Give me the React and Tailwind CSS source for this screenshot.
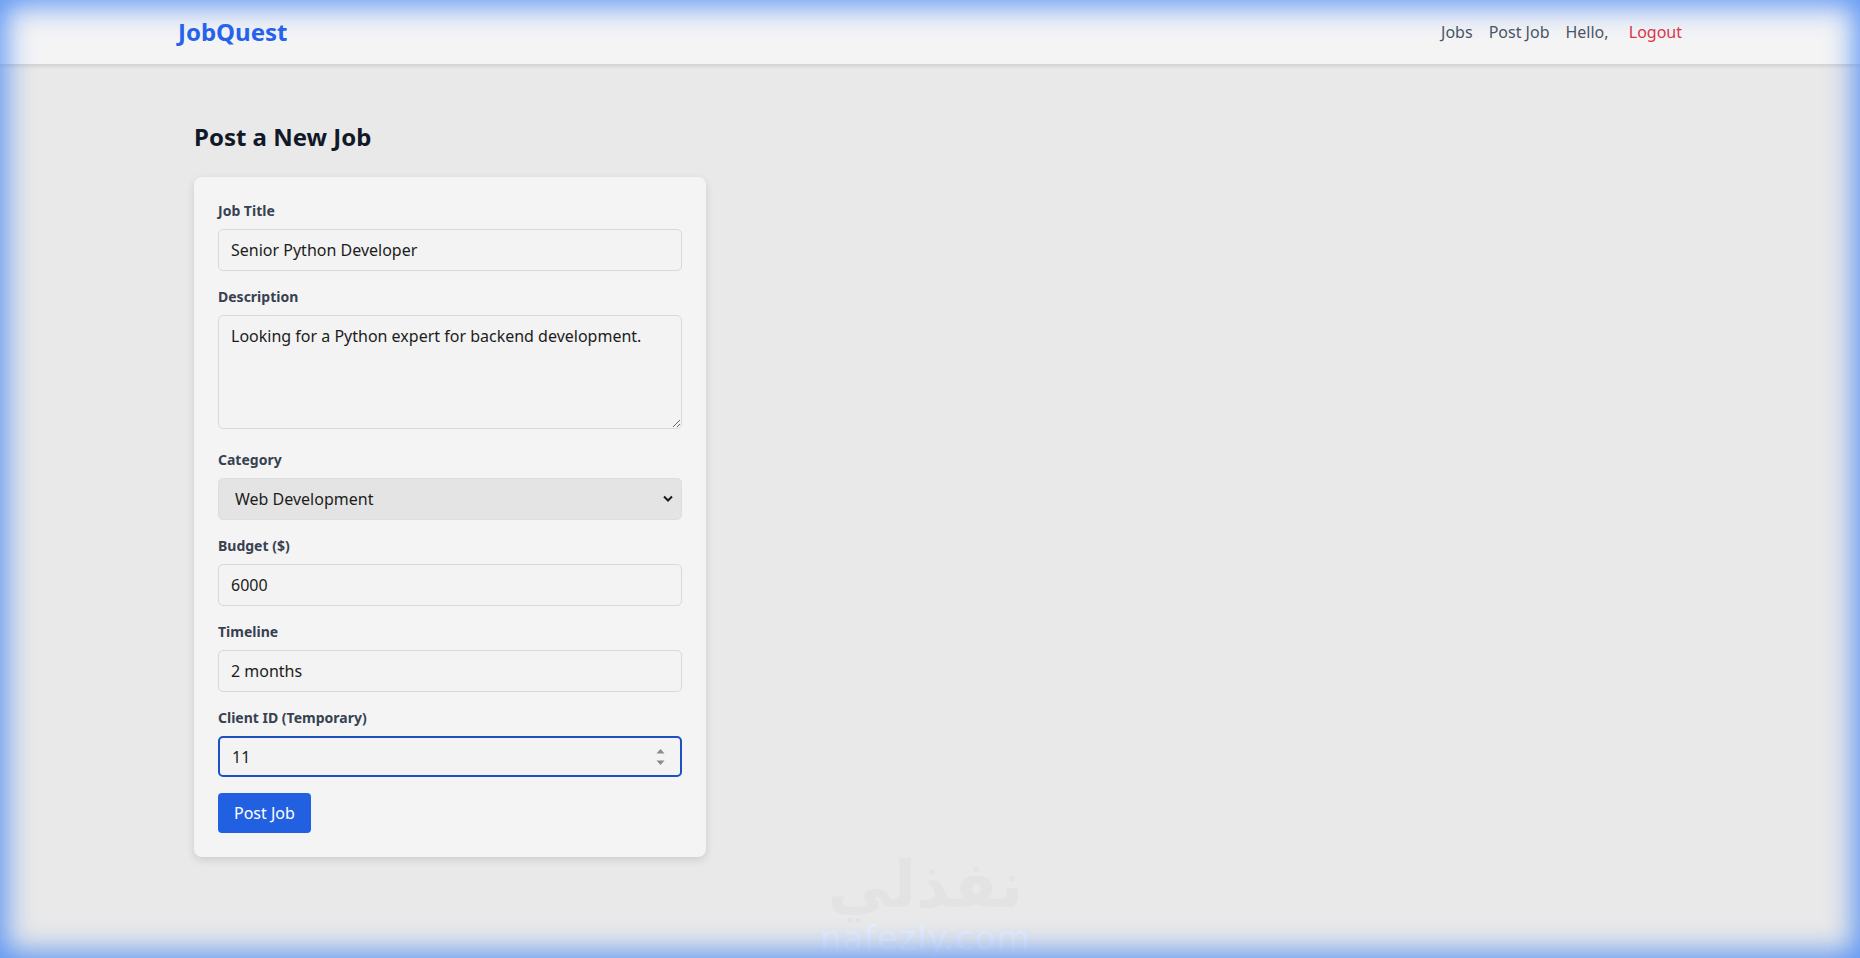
import React from "react";

const font = { fontFamily: '"Noto Sans", "Open Sans", "DejaVu Sans", sans-serif' };

function Field({ label, children, mb = "mb-4" }) {
  return (
    <div className={mb}>
      <label className="block text-sm font-bold text-[#374151] mb-2 leading-5">{label}</label>
      {children}
    </div>
  );
}

const inputCls =
  "block w-full h-[42px] px-3 py-2 text-base leading-6 text-[#1c1c1c] bg-[#f3f3f3] border border-[#d9d9d9] rounded-[5px] outline-none";

export default function App() {
  return (
    <div className="relative min-h-[958px] w-full bg-[#e9e9e9] overflow-hidden" style={font}>
      <nav className="bg-[#f4f4f5] shadow-[0_2px_4px_rgba(0,0,0,0.12)] relative z-10">
        <div className="container mx-auto px-4 h-16 flex items-center justify-between">
          <span className="text-2xl font-bold text-[#2563eb] leading-8">JobQuest</span>
          <div className="flex items-center gap-4 text-base text-[#4b5563]">
            <span>Jobs</span>
            <span>Post Job</span>
            <span className="whitespace-pre">Hello, </span>
            <span className="text-[#dc3545]">Logout</span>
          </div>
        </div>
      </nav>

      <main className="container mx-auto px-8 pt-[57px]">
        <h1 className="text-2xl font-bold text-[#111827] leading-8 mb-6">Post a New Job</h1>
        <div className="w-[512px] bg-[#f4f4f4] rounded-lg shadow-[0_3px_8px_rgba(0,0,0,0.12)] p-6">
          <Field label="Job Title">
            <input className={inputCls} defaultValue="Senior Python Developer" readOnly />
          </Field>
          <Field label="Description" mb="mb-[21px]">
            <textarea
              className="block w-full h-[114px] px-3 py-2 text-base leading-6 text-[#1c1c1c] bg-[#f3f3f3] border border-[#d9d9d9] rounded-[5px] outline-none"
              defaultValue="Looking for a Python expert for backend development."
              readOnly
            />
          </Field>
          <Field label="Category">
            <div className="relative">
              <div className="w-full h-[42px] pl-4 pr-3 flex items-center text-base text-[#1c1c1c] bg-[#e4e4e4] border border-[#dedede] rounded-[5px]">
                Web Development
              </div>
              <svg className="absolute right-[9px] top-[17px]" width="10" height="7" viewBox="0 0 10 7">
                <path d="M1 1.5 L5 5.5 L9 1.5" fill="none" stroke="#1a1a1a" strokeWidth="2" />
              </svg>
            </div>
          </Field>
          <Field label="Budget ($)">
            <input className={inputCls} defaultValue="6000" readOnly />
          </Field>
          <Field label="Timeline">
            <input className={inputCls} defaultValue="2 months" readOnly />
          </Field>
          <Field label="Client ID (Temporary)">
            <div className="relative">
              <div className="w-full h-[41px] px-3 flex items-center text-base text-[#1c1c1c] bg-[#f3f3f3] border-2 border-[#1e4fc4] rounded-[5px]">
                <span className="pl-0">11</span>
              </div>
              <svg className="absolute right-[17px] top-[12px]" width="9" height="18" viewBox="0 0 9 18">
                <path d="M0.5 5.5 L4.5 1 L8.5 5.5 Z" fill="#8a8a8a" />
                <path d="M0.5 12.5 L4.5 17 L8.5 12.5 Z" fill="#8a8a8a" />
              </svg>
            </div>
          </Field>
          <button className="h-10 px-4 text-base leading-6 text-white bg-[#2160e0] rounded-[4px]">Post Job</button>
        </div>
      </main>

      <div className="pointer-events-none absolute left-[820px] top-[850px] flex flex-col items-center select-none">
        <span className="text-[64px] font-bold leading-[70px] text-[#e3e3e3]" style={{ fontFamily: '"DejaVu Sans", sans-serif' }}>
          نفذلي
        </span>
        <span className="text-[34px] leading-[36px] text-[#e8eefb] tracking-wide" style={{ fontFamily: '"DejaVu Sans", sans-serif' }}>
          nafezly.com
        </span>
      </div>

      <div className="pointer-events-none absolute inset-0 z-20 shadow-[inset_0_0_28px_6px_rgba(66,133,244,0.85)]" />
    </div>
  );
}
